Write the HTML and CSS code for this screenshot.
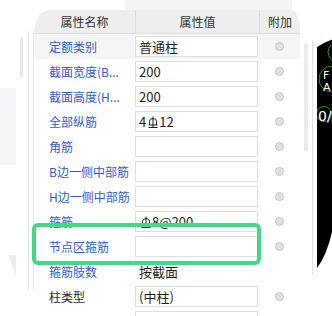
FILE: index.html
```html
<!DOCTYPE html>
<html lang="zh-CN">
<head>
<meta charset="utf-8">
<title>属性列表</title>
<link rel="stylesheet" href="styles.css">
</head>
<body>
<div class="screen">
  <div class="gutter">
    <div class="gutter-main">
      <div class="g-thumb"></div>
      <div class="g-block"></div>
      <div class="g-tri"></div>
    </div>
    <div class="gutter-line"></div>
  </div>

  <div class="panel">
    <div class="top-strip"></div>
    <div class="thead">
      <div class="th">属性名称</div>
      <div class="th sep">属性值</div>
      <div class="th sep">附加</div>
    </div>

    <div class="row sel">
      <div class="name">定额类别</div>
      <div class="val"><div class="box">普通柱</div></div>
      <div class="extra"><i class="radio"></i></div>
    </div>
    <div class="row">
      <div class="name">截面宽度(B...</div>
      <div class="val"><div class="box">200</div></div>
      <div class="extra"><i class="radio"></i></div>
    </div>
    <div class="row">
      <div class="name">截面高度(H...</div>
      <div class="val"><div class="box">200</div></div>
      <div class="extra"><i class="radio"></i></div>
    </div>
    <div class="row">
      <div class="name">全部纵筋</div>
      <div class="val"><div class="box">4<svg class="rebar" viewBox="0 0 10 12" aria-hidden="true"><path d="M1.5 9V5.2Q1.5 2.6 5 2.6Q8.5 2.6 8.5 5.2V9M5 0.5V11.5M0.5 9H9.5M0.5 11.5H9.5"/></svg>12</div></div>
      <div class="extra"><i class="radio"></i></div>
    </div>
    <div class="row">
      <div class="name">角筋</div>
      <div class="val"><div class="box"></div></div>
      <div class="extra"><i class="radio"></i></div>
    </div>
    <div class="row">
      <div class="name">B边一侧中部筋</div>
      <div class="val"><div class="box"></div></div>
      <div class="extra"><i class="radio"></i></div>
    </div>
    <div class="row">
      <div class="name">H边一侧中部筋</div>
      <div class="val"><div class="box"></div></div>
      <div class="extra"><i class="radio"></i></div>
    </div>
    <div class="row">
      <div class="name">箍筋</div>
      <div class="val"><div class="box"><svg class="rebar" viewBox="0 0 10 12" aria-hidden="true"><path d="M1.5 9V5.2Q1.5 2.6 5 2.6Q8.5 2.6 8.5 5.2V9M5 0.5V11.5M0.5 9H9.5M0.5 11.5H9.5"/></svg>8@200</div></div>
      <div class="extra"><i class="radio"></i></div>
    </div>
    <div class="row">
      <div class="name">节点区箍筋</div>
      <div class="val"><div class="box"></div></div>
      <div class="extra"><i class="radio"></i></div>
    </div>
    <div class="row">
      <div class="name">箍筋肢数</div>
      <div class="val"><div class="plain">按截面</div></div>
      <div class="extra"></div>
    </div>
    <div class="row">
      <div class="name dark">柱类型</div>
      <div class="val"><div class="box">(中柱)</div></div>
      <div class="extra"><i class="radio"></i></div>
    </div>
    <div class="row">
      <div class="name"></div>
      <div class="val"><div class="box"></div></div>
      <div class="extra"></div>
    </div>
  </div>

  <div class="side">
    <div class="vscroll"></div>
    <div class="divider"></div>
    <svg class="cad" viewBox="0 0 15 316" aria-hidden="true">
      <path class="cad-bg" d="M0 47Q7 42.5 15 39.5V232Q9.5 256 0 268Z"/>
      <circle class="cad-arc" cx="15" cy="79" r="13"/>
      <circle class="cad-arc" cx="7" cy="114" r="7.5"/>
      <circle class="cad-arc" cx="20" cy="52" r="9"/>
      <text class="cad-txt" x="6" y="79">F</text>
      <text class="cad-txt" x="6" y="91">A</text>
      <text class="cad-big" x="1" y="121">0/A</text>
    </svg>
  </div>

  <div class="highlight"></div>
</div>
</body>
</html>
```

FILE: styles.css
```css
* { box-sizing: border-box; }

html, body {
  margin: 0;
  padding: 0;
  background: #ffffff;
}

body {
  font-family: "Noto Sans CJK SC", "Noto Sans", sans-serif;
}

.screen {
  position: relative;
  width: 332px;
  height: 316px;
  overflow: hidden;
  display: flex;
  background: #ffffff;
}

/* left gutter */
.gutter {
  display: flex;
  flex: none;
  width: 34px;
}

.gutter-main {
  box-sizing: content-box;
  width: 28px;
  height: 259px;
  margin-top: 31px;
  border-right: 1px solid #e2e2e2;
  display: flex;
  flex-direction: column;
}

.g-thumb {
  width: 3px;
  height: 40px;
  margin: 6px 0 0 20px;
  background: #e8e8e8;
  border-radius: 2px 2px 0 0;
}

.g-block {
  width: 16px;
  height: 77px;
  margin-top: 11px;
  background: #f4f5f7;
}

.g-tri {
  width: 8px;
  height: 22px;
  margin: 90px 0 0 8px;
  background: #ededed;
  clip-path: polygon(0 0, 100% 0, 100% 100%);
}

.gutter-line {
  width: 1px;
  height: 257px;
  margin: 33px 0 0 4px;
  background: #e6e6e6;
}

/* property table */
.panel {
  flex: none;
  width: 266px;
  display: flex;
  flex-direction: column;
}

.top-strip {
  width: 167px;
  height: 10px;
  margin-left: 91px;
  background: #f4f4f4;
  flex: none;
}

.thead {
  flex: none;
  display: grid;
  grid-template-columns: 101px 124px 41px;
  height: 24px;
  background: #eeeeee;
  border-bottom: 1px solid #dcdcdc;
  border-radius: 15px 8px 0 0 / 23px 22px 0 0;
}

.th {
  display: flex;
  align-items: center;
  justify-content: center;
  font-size: 12px;
  color: #333333;
}

.th.sep {
  border-left: 1px solid #dcdcdc;
}

.row {
  flex: none;
  display: grid;
  grid-template-columns: 101px 124px 41px;
  height: 25px;
}

.row.sel {
  background: #f5f5f5;
}

.name {
  padding-left: 15px;
  font-size: 12px;
  line-height: 25px;
  color: #3159e6;
  white-space: nowrap;
  overflow: hidden;
}

.name.dark {
  color: #2a2a2a;
}

.val {
  padding-top: 2px;
}

.box {
  width: 123px;
  height: 21px;
  border: 1px solid #dedede;
  background: #ffffff;
  padding-left: 3px;
  font-size: 13px;
  line-height: 19px;
  color: #1e1e1e;
  white-space: nowrap;
  display: flex;
  align-items: center;
}

.plain {
  padding-left: 4px;
  font-size: 13px;
  line-height: 21px;
  color: #1e1e1e;
}

.rebar {
  width: 10px;
  height: 12px;
  margin: 0 1px 0 2px;
  fill: none;
  stroke: #1e1e1e;
  stroke-width: 1;
}

.extra {
  display: flex;
  align-items: center;
  justify-content: center;
}

.radio {
  display: block;
  width: 9px;
  height: 9px;
  border-radius: 50%;
  background: #e1e1e1;
  border: 1px solid #c6c6c6;
}

/* right side */
.side {
  flex: none;
  width: 32px;
  display: flex;
  align-items: flex-start;
}

.vscroll {
  width: 4px;
  height: 109px;
  margin: 43px 0 0 4px;
  background: #ececec;
  border-radius: 2px;
}

.divider {
  width: 1px;
  height: 235px;
  margin: 40px 0 0 4px;
  background: #e1e1e1;
}

.cad {
  width: 15px;
  height: 316px;
  margin-left: 4px;
  display: block;
}

.cad-bg { fill: #000000; }

.cad-arc {
  fill: none;
  stroke: #1f9a2a;
  stroke-width: 1;
}

.cad-txt {
  fill: #ffffff;
  font-family: "DejaVu Sans", sans-serif;
  font-size: 11px;
}

.cad-big {
  fill: #ffffff;
  font-family: "DejaVu Sans", sans-serif;
  font-size: 14px;
}

/* highlight overlay */
.highlight {
  position: absolute;
  left: 32px;
  top: 223px;
  width: 229px;
  height: 42px;
  border: 4px solid #3ddc84;
  border-radius: 6px;
  pointer-events: none;
}
```
